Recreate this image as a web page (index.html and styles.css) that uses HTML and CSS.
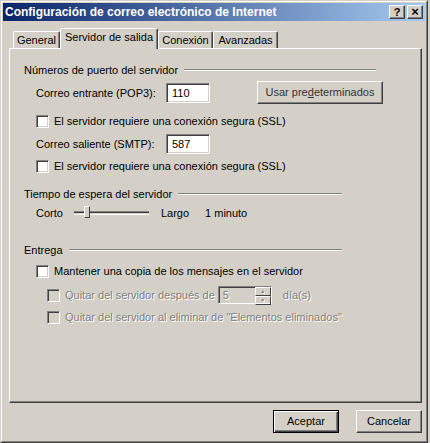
FILE: index.html
```html
<!DOCTYPE html>
<html lang="es">
<head>
    <meta charset="UTF-8">
    <title>Configuración de correo electrónico de Internet</title>
    <link rel="stylesheet" href="styles.css">
</head>
<body>
    <div class="window">
        <div class="frame">
            <div class="titlebar">
                <span class="title">Configuración de correo electrónico de Internet</span>
                <div class="caption-btns">
                    <span class="cap-btn">?</span>
                    <span class="cap-btn close">×</span>
                </div>
            </div>

            <div class="tabs">
                <span class="tab t-general">General</span>
                <span class="tab t-salida active">Servidor de salida</span>
                <span class="tab t-conexion">Conexión</span>
                <span class="tab t-avanzadas">Avanzadas</span>
            </div>

            <div class="panel">
                <!-- puertos -->
                <div class="group">
                    <div class="group-head wide"><span>Números de puerto del servidor</span><i class="rule"></i></div>
                    <div class="row row-pop">
                        <span class="lbl">Correo entrante (POP3):</span>
                        <span class="field">110</span>
                        <span class="btn btn-defaults">Usar pre<u>d</u>eterminados</span>
                    </div>
                    <div class="check c-ssl1"><span class="box"></span>El servidor requiere una conexión segura (SSL)</div>
                    <div class="row row-smtp">
                        <span class="lbl">Correo saliente (SMTP):</span>
                        <span class="field">587</span>
                    </div>
                    <div class="check c-ssl2"><span class="box"></span>El servidor requiere una conexión segura (SSL)</div>
                </div>

                <!-- tiempo de espera -->
                <div class="group g-timeout">
                    <div class="group-head"><span>Tiempo de espera del servidor</span><i class="rule"></i></div>
                    <div class="slider-row">
                        <span class="lbl">Corto</span>
                        <span class="track"><span class="thumb"></span></span>
                        <span class="lbl">Largo</span>
                        <span class="lbl minutes">1 minuto</span>
                    </div>
                </div>

                <!-- entrega -->
                <div class="group g-entrega">
                    <div class="group-head"><span>Entrega</span><i class="rule"></i></div>
                    <div class="check c-keep"><span class="box"></span>Mantener una copia de los mensajes en el servidor</div>
                    <div class="check sub disabled c-after">
                        <span class="box"></span>Quitar del servidor después de
                        <span class="spin"><span class="spin-val">5</span><span class="spin-btns"><b>▲</b><b>▼</b></span></span>
                        <span class="days">día(s)</span>
                    </div>
                    <div class="check sub disabled c-deleted"><span class="box"></span>Quitar del servidor al eliminar de "Elementos eliminados"</div>
                </div>
            </div>

            <div class="actions">
                <span class="btn default">Aceptar</span>
                <span class="btn">Cancelar</span>
            </div>
        </div>
    </div>
</body>
</html>
```

FILE: styles.css
```css
:root {
    --face: #d4d0c8;
    --light: #ffffff;
    --shadow: #808080;
    --dark: #404040;
    --text: #000000;
}
body {
    margin: 0;
    background-color: var(--face);
    font-family: 'Liberation Sans', Arial, sans-serif;
    font-size: 11px;
    color: var(--text);
}
.window {
    width: 428px;
    height: 443px;
    box-sizing: border-box;
    border: 1px solid;
    border-color: var(--face) var(--dark) var(--dark) var(--face);
}
.frame {
    height: 100%;
    box-sizing: border-box;
    border: 1px solid;
    border-color: var(--light) var(--shadow) var(--shadow) var(--light);
    padding: 1px;
    display: flex;
    flex-direction: column;
}
.titlebar {
    height: 18px;
    background: linear-gradient(to right, #0a246a, #a6caf0);
    display: flex;
    align-items: center;
    justify-content: space-between;
    padding: 0 2px 0 2px;
}
.title {
    color: #fff;
    font-weight: bold;
    font-size: 12px;
}
.caption-btns {
    display: flex;
    gap: 2px;
}
.cap-btn {
    width: 16px;
    height: 14px;
    box-sizing: border-box;
    background-color: var(--face);
    border: 1px solid;
    border-color: var(--light) var(--dark) var(--dark) var(--light);
    box-shadow: inset -1px -1px var(--shadow);
    font-weight: bold;
    font-size: 11px;
    line-height: 12px;
    text-align: center;
}
.cap-btn.close {
    font-size: 13px;
}

/* pestañas */
.tabs {
    display: flex;
    align-items: flex-end;
    height: 20px;
    margin-top: 7px;
    padding-left: 10px;
}
.tab {
    height: 17px;
    box-sizing: border-box;
    border: 1px solid;
    border-bottom: none;
    border-color: var(--light) var(--dark) transparent var(--light);
    border-radius: 2px 2px 0 0;
    box-shadow: inset -1px 0 var(--shadow);
    padding: 2px 0 0;
    text-align: center;
}
.t-general { width: 47px; }
.t-salida { width: 98px; }
.t-conexion { width: 55px; }
.t-avanzadas { width: 65px; }
.tab.active {
    height: 21px;
    margin-bottom: -1px;
    position: relative;
    z-index: 1;
    background-color: var(--face);
    padding-top: 2px;
}

/* panel */
.panel {
    width: 413px;
    height: 355px;
    box-sizing: border-box;
    margin-left: 6px;
    border: 1px solid;
    border-color: var(--light) var(--dark) var(--dark) var(--light);
    box-shadow: inset -1px -1px var(--shadow);
    padding: 14px 0 0 14px;
}
.group-head {
    display: flex;
    align-items: center;
    width: 318px;
    height: 13px;
}
.group-head.wide {
    width: 352px;
}
.rule {
    flex: 1;
    margin-left: 6px;
    border-top: 1px solid var(--shadow);
    border-bottom: 1px solid var(--light);
}
.row {
    display: flex;
    align-items: center;
    padding-left: 12px;
}
.row-pop {
    margin-top: 5px;
}
.row-smtp {
    margin-top: 6px;
}
.row .lbl {
    width: 130px;
}
.field {
    width: 44px;
    height: 20px;
    box-sizing: border-box;
    background-color: #fff;
    border: 1px solid;
    border-color: var(--shadow) var(--light) var(--light) var(--shadow);
    box-shadow: inset 1px 1px var(--dark), inset -1px -1px var(--face);
    padding: 3px 0 0 5px;
}
.btn {
    display: inline-block;
    box-sizing: border-box;
    height: 23px;
    background-color: var(--face);
    border: 1px solid;
    border-color: var(--light) var(--dark) var(--dark) var(--light);
    box-shadow: inset -1px -1px var(--shadow);
    text-align: center;
    line-height: 21px;
}
.btn-defaults {
    width: 126px;
    margin-left: 47px;
    color: #333;
}
.check {
    display: flex;
    align-items: center;
    padding-left: 12px;
    height: 14px;
}
.c-ssl1 { margin-top: 10px; }
.c-ssl2 { margin-top: 5px; }
.box {
    width: 13px;
    height: 13px;
    box-sizing: border-box;
    background-color: #fff;
    border: 1px solid;
    border-color: var(--shadow) var(--light) var(--light) var(--shadow);
    box-shadow: inset 1px 1px var(--dark), inset -1px -1px var(--face);
    margin-right: 5px;
    flex: none;
}
.check.sub {
    padding-left: 23px;
}
.disabled {
    color: var(--shadow);
    text-shadow: 1px 1px var(--light);
}
.disabled .box {
    background-color: var(--face);
}

.g-timeout {
    margin-top: 14px;
}
.slider-row {
    display: flex;
    align-items: center;
    padding-left: 12px;
    margin-top: 6px;
    height: 14px;
}
.track {
    position: relative;
    width: 75px;
    height: 2px;
    margin: 0 12px 0 11px;
    border-top: 1px solid var(--shadow);
    border-bottom: 1px solid var(--light);
    box-shadow: inset 0 1px var(--dark);
}
.thumb {
    position: absolute;
    left: 10px;
    top: -6px;
    width: 6px;
    height: 12px;
    box-sizing: border-box;
    background-color: var(--face);
    border: 1px solid;
    border-color: var(--light) var(--dark) var(--dark) var(--light);
}
.minutes {
    margin-left: 16px;
}

.g-entrega {
    margin-top: 23px;
}
.c-keep { margin-top: 8px; }
.c-after {
    margin-top: 10px;
}
.c-deleted { margin-top: 8px; }
.spin {
    display: flex;
    width: 54px;
    height: 18px;
    box-sizing: border-box;
    margin-left: 3px;
    border: 1px solid;
    border-color: var(--shadow) var(--light) var(--light) var(--shadow);
    box-shadow: inset 1px 1px var(--dark);
    background-color: var(--face);
}
.spin-val {
    flex: 1;
    padding: 2px 0 0 4px;
}
.spin-btns {
    display: flex;
    flex-direction: column;
    width: 16px;
}
.spin-btns b {
    flex: 1;
    font-size: 5px;
    font-weight: normal;
    text-align: center;
    line-height: 7px;
    border: 1px solid;
    border-color: var(--light) var(--dark) var(--dark) var(--light);
}
.days {
    margin-left: 11px;
}

/* botones */
.actions {
    display: flex;
    justify-content: flex-end;
    gap: 17px;
    margin-top: 7px;
    padding-right: 3px;
}
.actions .btn {
    width: 66px;
}
.btn.default {
    border: 1px solid #000;
    box-shadow: inset 1px 1px var(--light), inset -1px -1px var(--dark), inset -2px -2px var(--shadow);
}
```
